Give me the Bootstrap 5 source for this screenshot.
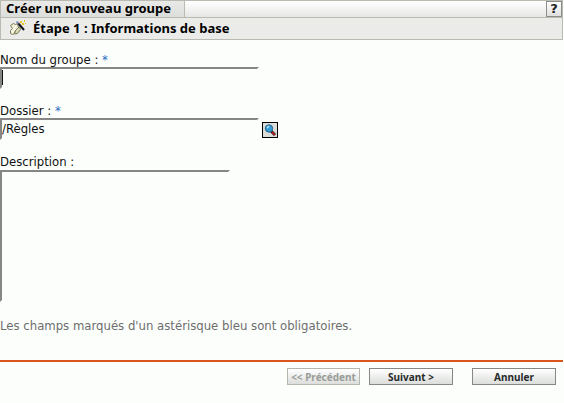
<!DOCTYPE html>
<html lang="fr">
<head>
<meta charset="utf-8">
<meta name="viewport" content="width=device-width, initial-scale=1">
<title>Créer un nouveau groupe</title>
<link href="https://cdn.jsdelivr.net/npm/bootstrap@5.3.0/dist/css/bootstrap.min.css" rel="stylesheet">
<style>
body { background: #fcfefc; color: #111; font: 13px/17px "DejaVu Sans Condensed", "DejaVu Sans", sans-serif; padding-right: 1px; }
.wizard-head { border: 1px solid #b9bab2; background: #ebecea; }
.title-bar { height: 17px; background: linear-gradient(#fff, #e6e7e5); border-bottom: 1px solid #b9bab2; }
.title-tab { width: 184px; padding-left: 5px; background: linear-gradient(#e9eae8, #dcdedb); border-right: 1px solid #b9bab2; }
.title-tab h1, .step-bar h2 { font: 700 13px/14px "Noto Sans", sans-serif; color: #000; }
.help-btn { width: 16px; height: 16px; border: 1px solid #8b8d89; background: linear-gradient(#fff, #dfe0de); font: 700 13px/14px "DejaVu Sans", sans-serif; color: #222; }
.step-bar { height: 21px; padding: 0 0 2px 8px; gap: 7px; }
.wizard-form { padding-top: 11px; }
.field { margin-bottom: 13px; }
.field label { padding-top: 2px; line-height: 14px; }
.field-area label { margin-bottom: 1px; }
.req { color: #2b6cc4; }
.sunken { border: 2px solid; border-color: #868686 #fcfdfc #fcfdfc #868686; background: #fcfefc; color: #111; line-height: 17px; outline: 0; resize: none; }
.line-input { width: 259px; height: 22px; padding: 0 0 1px; }
.with-caret { background: linear-gradient(#111, #111) 0 1px / 1px 15px no-repeat #fcfefc; }
.desc-box { width: 230px; height: 132px; }
.search-btn { width: 16px; height: 16px; border: 1px solid #000; background: #dcdcd8; margin: 4px 0 0 3px; }
.hint { color: #6d6e6c; padding-top: 2px; }
.wizard-foot { border-top: 2px solid #d9561c; margin-top: 26px; padding: 6px 7px 0 0; }
.wiz-btn { width: 84px; height: 17px; border: 1px solid #858885; background: linear-gradient(#fff, #dcdedb); color: #262b2b; font: 700 10px/14px "Noto Sans", sans-serif; white-space: nowrap; margin-left: 19px; }
.wiz-btn:disabled { width: 73px; border-color: #b5b7ae; color: #999c98; }
.wiz-btn:disabled + .wiz-btn { margin-left: 9px; }
</style>
<script src="https://cdn.jsdelivr.net/npm/bootstrap@5.3.0/dist/js/bootstrap.bundle.min.js"></script>
</head>
<body>
<header class="wizard-head">
  <div class="title-bar d-flex justify-content-between">
    <div class="title-tab"><h1 class="m-0">Créer un nouveau groupe</h1></div>
    <button type="button" class="help-btn p-0" aria-label="Aide">?</button>
  </div>
  <div class="step-bar d-flex align-items-center">
    <svg width="17" height="15" viewBox="0 0 17 15" aria-hidden="true">
      <path d="M1.500 5.500l3-2 2 1 2-1 1 4-3 3-1 3-2 1-2-1v-3l2-2z" fill="#efeed2" stroke="#7c7a58"/>
      <path d="M6.500 10.500l4-4 1 3-3 4-3 .5z" fill="#d9d8b8" stroke="#7c7a58"/>
      <path d="M4 9l4-4M3 12l3-3" stroke="#fff"/>
      <path d="M9 3l6 7" stroke="#15161f" stroke-width="2"/>
      <path d="M7.500 1.500l2 2" stroke="#8995b4" stroke-width="2"/>
      <path d="M11 1h2v2h-2zM15 0h1v2h-1zM13 3h2v2h-2zM16 3h1v1h-1z" fill="#e7c51e"/>
    </svg>
    <h2 class="m-0">Étape 1 : Informations de base</h2>
  </div>
</header>
<main>
  <form class="wizard-form">
    <div class="field">
      <label for="nom" class="d-block">Nom du groupe : <span class="req">*</span></label>
      <input id="nom" type="text" class="sunken line-input with-caret d-block" required>
    </div>
    <div class="field">
      <label for="dossier" class="d-block">Dossier : <span class="req">*</span></label>
      <div class="d-flex">
        <input id="dossier" type="text" class="sunken line-input" value="/Règles" required>
        <button type="button" class="search-btn p-0 d-flex" aria-label="Parcourir">
          <svg width="14" height="14" viewBox="0 0 14 14" aria-hidden="true">
            <path d="M8 8l4 4" stroke="#1b1b1b" stroke-width="3"/>
            <path d="M9 9l3 3" stroke="#d5202a" stroke-width="1.5"/>
            <circle cx="6" cy="5.500" r="3.700" fill="#359bd6" stroke="#28638d"/>
            <path d="M4 5l2-2" stroke="#b9e6fa" stroke-width="1.500"/>
          </svg>
        </button>
      </div>
    </div>
    <div class="field field-area">
      <label for="desc" class="d-block">Description :</label>
      <textarea id="desc" class="sunken desc-box d-block p-0"></textarea>
    </div>
    <p class="hint m-0">Les champs marqués d'un astérisque bleu sont obligatoires.</p>
    <div class="wizard-foot d-flex justify-content-end">
      <button type="button" class="wiz-btn p-0" disabled>&lt;&lt; Précédent</button>
      <button type="submit" class="wiz-btn p-0">Suivant &gt;</button>
      <button type="button" class="wiz-btn p-0">Annuler</button>
    </div>
  </form>
</main>
</body>
</html>
